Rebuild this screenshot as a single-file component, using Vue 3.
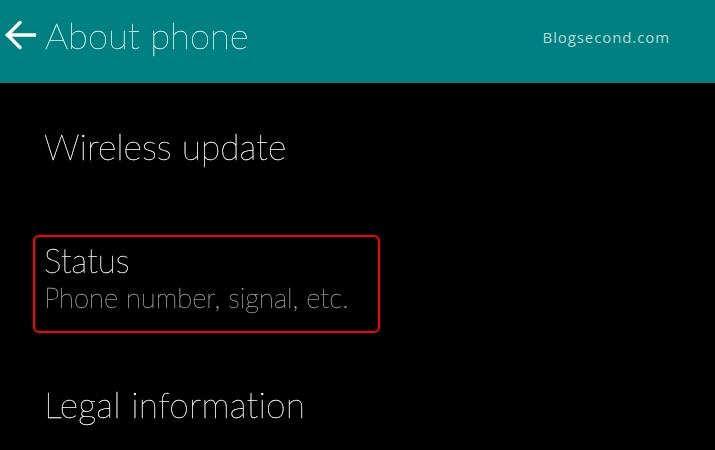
<template>
  <div class="screen">
    <!-- Action bar -->
    <header class="action-bar">
      <div class="title-section">
        <svg class="back-icon" viewBox="0 0 32 32" width="32" height="32" aria-hidden="true">
          <path d="M31.500 16H3M16 3.500L3.500 16L16 28.500" fill="none" stroke="#fff" stroke-width="3.400" stroke-linecap="round" stroke-linejoin="miter" />
        </svg>
        <h1 class="title">About phone</h1>
      </div>
      <span class="watermark">Blogsecond.com</span>
    </header>

    <!-- Settings list -->
    <ul class="settings-list">
      <li v-for="item in items" :key="item.title" class="settings-item" :class="{ 'settings-item--marked': item.marked }">
        <div class="item-title">{{ item.title }}</div>
        <div v-if="item.summary" class="item-summary">{{ item.summary }}</div>
      </li>
    </ul>
  </div>
</template>

<script setup>
const items = [
  { title: 'Wireless update' },
  { title: 'Status', summary: 'Phone number, signal, etc.', marked: true },
  { title: 'Legal information' }
]
</script>

<style>
html,
body {
  margin: 0;
  background: #000;
}
</style>

<style scoped>
.screen {
  width: 715px;
  height: 450px;
  overflow: hidden;
  background: #000;
  color: #fff;
  font-family: "Lato", "Liberation Sans", sans-serif;
}

.action-bar {
  height: 83px;
  box-sizing: border-box;
  padding: 0 45px 13px 4px;
  display: flex;
  align-items: center;
  justify-content: space-between;
  background: #008080;
}

.title-section {
  display: flex;
  align-items: center;
  gap: 9px;
}

.back-icon {
  flex-shrink: 0;
}

/* own layer, so the thin text gets grey antialiasing instead of colour fringes */
.title,
.item-title,
.item-summary {
  will-change: transform;
}

.title {
  margin: 0;
  font-size: 36.500px;
  font-weight: 100;
  line-height: 44px;
  color: #e4f1f1;
  -webkit-text-stroke: 0.300px #e4f1f1;
}

.watermark {
  padding-top: 4px;
  font-family: "Open Sans", "Liberation Sans", sans-serif;
  font-size: 15px;
  letter-spacing: 0.900px;
  color: #b9d9d9;
}

.settings-list {
  margin: 0;
  padding: 0 0 0 33px;
  list-style: none;
}

.settings-item {
  width: 347px;
  box-sizing: border-box;
  padding-left: 11px;
}

.settings-item:first-child {
  padding-top: 42px;
  height: 152px;
}

.settings-item--marked {
  height: 98px;
  padding-top: 4px;
  border: 2px solid #f00;
  border-radius: 6px;
  padding-left: 9px;
}

.settings-item:last-child {
  margin-top: 50px;
}

.item-title {
  font-size: 35.500px;
  font-weight: 100;
  line-height: 44px;
  white-space: nowrap;
  -webkit-text-stroke: 0.300px #fff;
}

.settings-item:last-child .item-title {
  letter-spacing: 0.200px;
}

.settings-item--marked .item-title {
  font-size: 33px;
  line-height: 38px;
}

.item-summary {
  margin-top: 1px;
  font-size: 27.400px;
  font-weight: 100;
  line-height: 36px;
  white-space: nowrap;
  color: #a6a6a6;
  -webkit-text-stroke: 0.300px #a6a6a6;
}
</style>
